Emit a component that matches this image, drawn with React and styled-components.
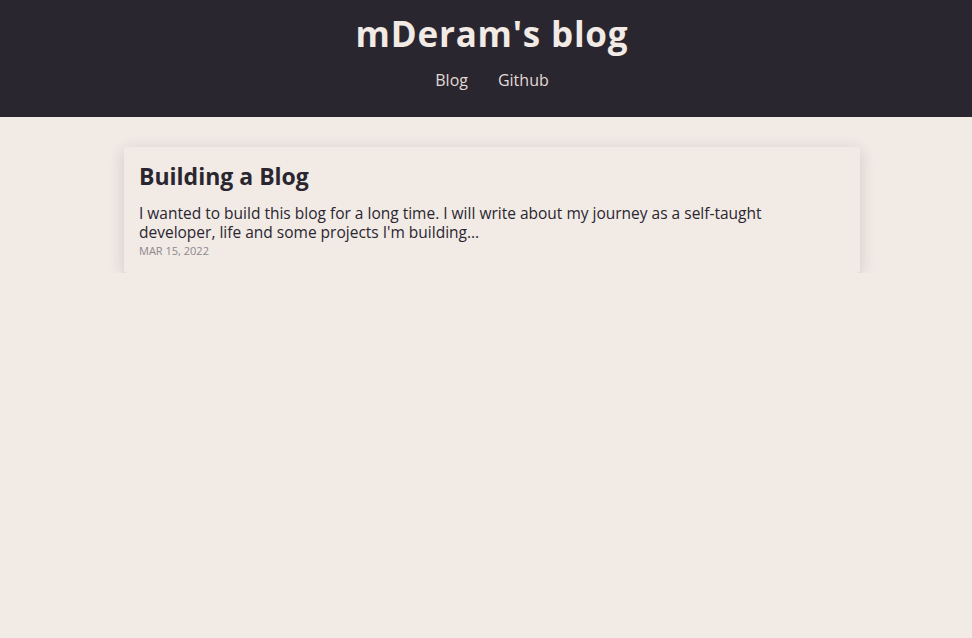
import React from "react";
import styled, { createGlobalStyle } from "styled-components";

const GlobalStyle = createGlobalStyle`
  * {
    box-sizing: border-box;
  }

  body {
    margin: 0;
    background-color: #f1eae5;
    color: #2a2630;
    font-family: "Open Sans", "Noto Sans", sans-serif;
  }
`;

const posts = [
  {
    id: "building-a-blog",
    title: "Building a Blog",
    excerpt:
      "I wanted to build this blog for a long time. I will write about my journey as a self-taught developer, life and some projects I'm building...",
    date: "Mar 15, 2022",
  },
];

const App = () => {
  return (
    <>
      <GlobalStyle />
      <Header>
        <SiteTitle href="/">mDeram's blog</SiteTitle>
        <Nav>
          <NavLink href="/blog">Blog</NavLink>
          <NavLink href="https://github.com/mDeram">Github</NavLink>
        </Nav>
      </Header>
      <Main>
        {posts.map((post) => (
          <Card key={post.id} href={`/blog/${post.id}`}>
            <CardTitle>{post.title}</CardTitle>
            <Excerpt>{post.excerpt}</Excerpt>
            <PostDate>{post.date}</PostDate>
          </Card>
        ))}
      </Main>
    </>
  );
};

const Header = styled.header`
  display: flex;
  flex-direction: column;
  align-items: center;
  height: 117px;
  padding: 12px 0 0 12px;
  background-color: #2a2630;
`;

const SiteTitle = styled.a`
  font-size: 35px;
  font-weight: 700;
  line-height: 44px;
  letter-spacing: 0.8px;
  color: #f1eae5;
  text-decoration: none;
`;

const Nav = styled.nav`
  display: flex;
  gap: 30px;
  margin-top: 13px;
`;

const NavLink = styled.a`
  font-size: 16px;
  line-height: 22px;
  color: #e2dad5;
  text-decoration: none;
`;

const Main = styled.main`
  display: flex;
  flex-direction: column;
  align-items: center;
  padding: 30px 0 0 12px;
`;

const Card = styled.a`
  display: block;
  width: 736px;
  padding: 14px 15px 15px;
  border-radius: 4px;
  background-color: #f1eae5;
  box-shadow: 0 3px 16px rgba(42, 38, 48, 0.16);
  color: #2a2630;
  text-decoration: none;
`;

const CardTitle = styled.h2`
  margin: 0;
  font-size: 23px;
  font-weight: 700;
  line-height: 30px;
`;

const Excerpt = styled.p`
  max-width: 660px;
  margin: 13px 0 0;
  font-size: 15.5px;
  line-height: 19px;
`;

const PostDate = styled.div`
  margin-top: 1px;
  font-size: 11px;
  line-height: 15px;
  text-transform: uppercase;
  color: #8c8890;
`;

export default App;
